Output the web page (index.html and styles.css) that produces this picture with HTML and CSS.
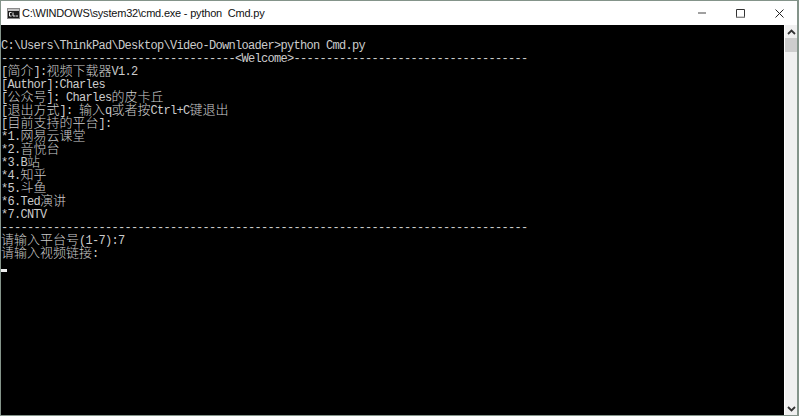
FILE: index.html
```html
<!DOCTYPE html>
<html lang="zh">
<head>
<meta charset="utf-8">
<title>cmd.exe - python Cmd.py</title>
<link rel="stylesheet" href="styles.css">
</head>
<body>
<div class="window">
  <header class="titlebar">
    <svg class="app-icon" width="13" height="11" viewBox="0 0 13 11">
      <rect x="0.5" y="0.5" width="12" height="10" fill="#1a1a1a" stroke="#8a8a8a"/>
      <rect x="1" y="1" width="11" height="2" fill="#c4c4c4"/>
      <path d="M2.500 4.500H4.500M2.500 4.500V8H4.500M6 4.500V8H8M8.500 8H11" fill="none" stroke="#eee" stroke-width="1"/>
    </svg>
    <span class="title">C:\WINDOWS\system32\cmd.exe - python&nbsp; Cmd.py</span>
    <div class="controls">
      <svg class="ctl" width="8" height="9" viewBox="0 0 8 9"><path d="M0 4H8" stroke="#777" stroke-width="1.400"/></svg>
      <svg class="ctl" width="9" height="9" viewBox="0 0 9 9"><path d="M.5 .5H8.500V8.500H.5Z" fill="none" stroke="#333"/><path d="M0 8.300H9" stroke="#888" stroke-width="1.400"/></svg>
      <svg class="ctl" width="9" height="9" viewBox="0 0 9 9"><path d="M.5 .5L8.500 8.500M8.500 .5L.5 8.500" stroke="#222" stroke-width="1"/></svg>
    </div>
  </header>
  <div class="client">
    <main class="console">
      <div class="line">&nbsp;</div>
      <div class="line">C:\Users\ThinkPad\Desktop\Video-Downloader&gt;python Cmd.py</div>
      <div class="line">------------------------------------&lt;Welcome&gt;------------------------------------</div>
      <div class="line">[<span class="c">简介</span>]:<span class="c">视频下载器</span>V1.2</div>
      <div class="line">[Author]:Charles</div>
      <div class="line">[<span class="c">公众号</span>]: Charles<span class="c">的皮卡丘</span></div>
      <div class="line">[<span class="c">退出方式</span>]: <span class="c">输入</span>q<span class="c">或者按</span>Ctrl+C<span class="c">键退出</span></div>
      <div class="line">[<span class="c">目前支持的平台</span>]:</div>
      <div class="line">*1.<span class="c">网易云课堂</span></div>
      <div class="line">*2.<span class="c">音悦台</span></div>
      <div class="line">*3.B<span class="c">站</span></div>
      <div class="line">*4.<span class="c">知乎</span></div>
      <div class="line">*5.<span class="c">斗鱼</span></div>
      <div class="line">*6.Ted<span class="c">演讲</span></div>
      <div class="line">*7.CNTV</div>
      <div class="line">---------------------------------------------------------------------------------</div>
      <div class="line"><span class="c">请输入平台号</span>(1-7):7</div>
      <div class="line"><span class="c">请输入视频链接</span>:</div>
      <div class="line"><span class="cursor"></span></div>
    </main>
    <aside class="scrollbar">
      <div class="arrow"><svg width="9" height="6" viewBox="0 0 9 6"><path d="M1 5L4.500 1.500L8 5" fill="none" stroke="#333" stroke-width="1.800"/></svg></div>
      <div class="thumb"></div>
      <div class="track"></div>
      <div class="arrow"><svg width="9" height="6" viewBox="0 0 9 6"><path d="M1 1L4.500 4.500L8 1" fill="none" stroke="#333" stroke-width="1.800"/></svg></div>
    </aside>
  </div>
</div>
</body>
</html>
```

FILE: styles.css
```css
html, body {
  margin: 0;
  padding: 0;
  background: #fff;
}
.window {
  width: 799px;
  height: 416px;
  box-sizing: border-box;
  display: flex;
  flex-direction: column;
  border-top: 1px solid #84948a;
  border-left: 1px solid #84948a;
  border-right: 2px solid #84948a;
  border-bottom: 1px solid #84948a;
  overflow: hidden;
}
.titlebar {
  height: 24px;
  flex: none;
  display: flex;
  align-items: center;
  background: #fff;
  padding-left: 6px;
}
.app-icon { flex: none; margin-right: 2px; }
.title {
  font: 11px "Liberation Sans", Arial, sans-serif;
  letter-spacing: -0.2px;
  color: #111;
  white-space: nowrap;
}
.controls {
  margin-left: auto;
  display: flex;
  gap: 30px;
  align-items: center;
  padding-right: 13px;
}
.ctl { display: block; }
.client {
  flex: 1;
  min-height: 0;
  display: flex;
}
.console {
  flex: 1;
  min-width: 0;
  background: #000;
  color: #ccc;
  font-family: "Liberation Mono", monospace;
  font-size: 12px;
  letter-spacing: -0.7px;
  padding-top: 2px;
  overflow: hidden;
}
.line {
  height: 13px;
  line-height: 13px;
  white-space: pre;
}
.c {
  font-family: "Noto Sans CJK SC", sans-serif;
  font-size: 13px;
  font-weight: 300;
  letter-spacing: 0;
  line-height: 0;
}
.cursor {
  display: block;
  width: 6px;
  height: 3px;
  margin-top: 8px;
  background: #eee;
}
.scrollbar {
  width: 12px;
  margin-left: 1px;
  flex: none;
  display: flex;
  flex-direction: column;
  background: #f0f0f0;
}
.arrow {
  height: 13px;
  flex: none;
  display: flex;
  align-items: center;
  justify-content: center;
}
.thumb {
  height: 14px;
  flex: none;
  background: #cdcdcd;
}
.track { flex: 1; }
```
